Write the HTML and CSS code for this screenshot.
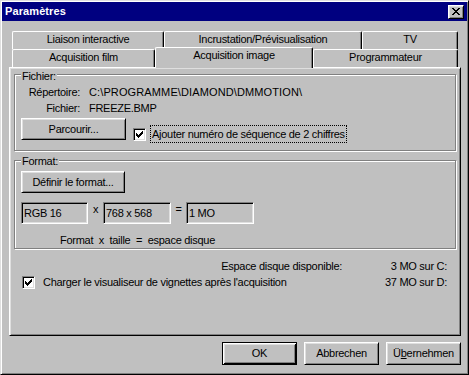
FILE: index.html
```html
<!DOCTYPE html>
<html lang="fr">
<head>
<meta charset="utf-8">
<title>Paramètres</title>
<link rel="stylesheet" href="styles.css">
</head>
<body>
<div class="window">
  <div class="titlebar">
    <span class="title">Paramètres</span>
    <span class="close">
      <svg width="8" height="7" viewBox="0 0 8 7" shape-rendering="crispEdges"><path d="M0 0h2v1H0zM6 0h2v1H6zM1 1h2v1H1zM5 1h2v1H5zM2 2h4v1H2zM3 3h2v1H3zM2 4h4v1H2zM1 5h2v1H1zM5 5h2v1H5zM0 6h2v1H0zM6 6h2v1H6z" fill="#000"/></svg>
    </span>
  </div>
  <div class="client">
    <div class="tabs">
      <div class="tabrow">
        <div class="tab t-liaison">Liaison interactive</div>
        <div class="tab t-incrust">Incrustation/Prévisualisation</div>
        <div class="tab t-tv">TV</div>
      </div>
      <div class="tabrow">
        <div class="tab t-film">Acquisition film</div>
        <div class="tab t-image active">Acquisition image</div>
        <div class="tab t-prog">Programmateur</div>
      </div>
    </div>
    <div class="panel">
      <div class="group g-fichier">
        <div class="legend">Fichier:</div>
        <div class="field-row first"><span class="lbl">Répertoire:</span><span class="val caps">C:\PROGRAMME\DIAMOND\DMMOTION\</span></div>
        <div class="field-row"><span class="lbl">Fichier:</span><span class="val">FREEZE.BMP</span></div>
        <div class="action-row">
          <div class="btn b-parcourir">Parcourir...</div>
          <div class="check-wrap">
            <span class="checkbox"><svg width="7" height="7" viewBox="0 0 7 7" shape-rendering="crispEdges"><path d="M6 0h1v1H6zM5 1h2v1H5zM0 2h1v1H0zM4 2h3v1H4zM0 3h2v1H0zM3 3h3v1H3zM0 4h5v1H0zM1 5h3v1H1zM2 6h1v1H2z" fill="#000"/></svg></span>
            <span class="focus">Ajouter numéro de séquence de 2 chiffres</span>
          </div>
        </div>
      </div>
      <div class="group g-format">
        <div class="legend">Format:</div>
        <div class="btn b-definir">Définir le format...</div>
        <div class="fields">
          <div class="field f-rgb">RGB 16</div>
          <span class="sep">x</span>
          <div class="field f-wide">768 x 568</div>
          <span class="sep">=</span>
          <div class="field f-wide">1 MO</div>
        </div>
        <div class="caption">Format  x  taille  =  espace disque</div>
      </div>
      <div class="info">
        <div class="info-row">
          <span class="info-lbl">Espace disque disponible:</span>
          <span class="info-val">3 MO sur C:</span>
        </div>
        <div class="info-row">
          <span class="checkbox cb-left"><svg width="7" height="7" viewBox="0 0 7 7" shape-rendering="crispEdges"><path d="M6 0h1v1H6zM5 1h2v1H5zM0 2h1v1H0zM4 2h3v1H4zM0 3h2v1H0zM3 3h3v1H3zM0 4h5v1H0zM1 5h3v1H1zM2 6h1v1H2z" fill="#000"/></svg></span>
          <span class="cb-label">Charger le visualiseur de vignettes après l'acquisition</span>
          <span class="info-val">37 MO sur D:</span>
        </div>
      </div>
    </div>
    <div class="buttons">
      <div class="btn dlg default">OK</div>
      <div class="btn dlg">Abbrechen</div>
      <div class="btn dlg">Ü<u>b</u>ernehmen</div>
    </div>
  </div>
</div>
</body>
</html>
```
FILE: styles.css
```css
html, body {
  margin: 0;
  padding: 0;
  background: #c0c0c0;
}
body {
  font-family: "Liberation Sans", Arial, sans-serif;
  font-size: 11px;
  letter-spacing: -0.28px;
  color: #000;
}
.window {
  width: 469px;
  height: 375px;
  box-sizing: border-box;
  background: #c0c0c0;
  border: 1px solid;
  border-color: #dfdfdf #000 #000 #dfdfdf;
  box-shadow: inset 1px 1px 0 #fff, inset -1px -1px 0 #808080;
  padding: 1px;
}
.titlebar {
  height: 19px;
  background: #000080;
  display: flex;
  align-items: center;
  justify-content: space-between;
  padding-left: 3px;
}
.title {
  color: #fff;
  font-weight: bold;
  font-size: 11px;
  line-height: 13px;
  letter-spacing: 0.1px;
}
.close {
  box-sizing: border-box;
  width: 16px;
  height: 14px;
  margin-right: 3px;
  background: #c0c0c0;
  border: 1px solid;
  border-color: #fff #000 #000 #fff;
  box-shadow: inset 1px 1px 0 #dfdfdf, inset -1px -1px 0 #808080;
  display: flex;
  align-items: center;
  justify-content: center;
}
.close svg { display: block; margin-left: -1px; }
.client {
  padding: 10px 6px 0 7px;
}
.tabs {
  margin-left: 3px;
  width: 446px;
}
.tabrow {
  display: flex;
  height: 18px;
}
.tab {
  box-sizing: border-box;
  height: 18px;
  border-top: 1px solid #fff;
  border-left: 1px solid #fff;
  border-right: 1px solid #000;
  border-radius: 2px 2px 0 0;
  box-shadow: inset -1px 0 0 #808080;
  padding-top: 1px;
  line-height: 13px;
  text-align: center;
  white-space: nowrap;
  background: #c0c0c0;
}
.t-liaison { width: 152px; }
.t-incrust { width: 198px; }
.t-tv { width: 96px; }
.t-film { width: 143px; }
.t-image { width: 158px; }
.t-prog { width: 145px; }
.tab.active {
  position: relative;
  z-index: 1;
  height: 21px;
  margin-top: -2px;
}
.panel {
  height: 269px;
  box-sizing: border-box;
  border: 1px solid;
  border-color: #fff #000 #000 #fff;
  box-shadow: inset 1px 1px 0 #dfdfdf, inset -1px -1px 0 #808080;
  padding: 6px 4px 0 4px;
}
.group {
  border: 1px solid #808080;
  box-shadow: 1px 1px 0 #fff, inset 1px 1px 0 #fff;
  display: flex;
  flex-direction: column;
}
.legend {
  align-self: flex-start;
  margin: -5px 0 0 6px;
  padding: 0 1px;
  background: #c0c0c0;
  line-height: 13px;
}
.g-fichier { padding-bottom: 7px; }
.field-row {
  display: flex;
  line-height: 16px;
  white-space: nowrap;
}
.field-row.first { margin-top: 1px; }
.lbl {
  width: 65px;
  text-align: right;
}
.val { margin-left: 9px; }
.val.caps { letter-spacing: 0.12px; }
.action-row {
  display: flex;
  align-items: flex-start;
  margin-top: 2px;
  padding-left: 6px;
}
.btn {
  box-sizing: border-box;
  height: 22px;
  border: 1px solid;
  border-color: #fff #000 #000 #fff;
  box-shadow: inset 1px 1px 0 #dfdfdf, inset -1px -1px 0 #808080;
  display: flex;
  align-items: center;
  justify-content: center;
  line-height: 13px;
  white-space: nowrap;
}
.b-parcourir { width: 105px; }
.check-wrap {
  display: flex;
  align-items: center;
  margin: 7px 0 0 7px;
}
.checkbox {
  box-sizing: border-box;
  width: 13px;
  height: 13px;
  background: #fff;
  border: 1px solid;
  border-color: #808080 #fff #fff #808080;
  box-shadow: inset 1px 1px 0 #000, inset -1px -1px 0 #dfdfdf;
  display: flex;
  padding: 2px 0 0 2px;
  flex: none;
}
.checkbox svg { display: block; }
.focus {
  margin-left: 4px;
  border: 1px dotted #000;
  padding: 0 1px;
  line-height: 16px;
  white-space: nowrap;
}
.g-format {
  margin-top: 9px;
  padding-bottom: 1px;
}
.g-format .legend { margin-top: -6px; }
.b-definir {
  width: 104px;
  margin: 3px 0 0 6px;
}
.fields {
  display: flex;
  align-items: flex-start;
  margin-top: 9px;
  padding-left: 6px;
}
.field {
  box-sizing: border-box;
  height: 22px;
  border: 1px solid;
  border-color: #808080 #fff #fff #808080;
  box-shadow: inset 1px 1px 0 #000, inset -1px -1px 0 #dfdfdf;
  padding-left: 2px;
  display: flex;
  align-items: center;
  line-height: 13px;
  white-space: nowrap;
}
.f-rgb { width: 67px; }
.f-wide { width: 68px; }
.sep {
  width: 15px;
  text-align: center;
  line-height: 13px;
  padding-top: 1px;
}
.caption {
  margin: 10px 0 0 6px;
  width: 233px;
  text-align: center;
  line-height: 13px;
  white-space: pre;
}
.info {
  margin-top: 9px;
  padding-right: 9px;
}
.info-row {
  display: flex;
  align-items: center;
  line-height: 16px;
  white-space: nowrap;
}
.info-lbl { margin-left: auto; }
.info-val {
  width: 105px;
  text-align: right;
  margin-left: auto;
}
.info-row:first-child .info-val { margin-left: 0; }
.cb-left { margin-left: 8px; }
.cb-label { margin-left: 8px; }
.buttons {
  display: flex;
  justify-content: flex-end;
  gap: 7px;
  margin-top: 6px;
}
.btn.dlg {
  width: 75px;
  height: 23px;
}
.btn.default {
  border-color: #000;
  box-shadow: inset 1px 1px 0 #fff, inset -1px -1px 0 #000, inset 2px 2px 0 #dfdfdf, inset -2px -2px 0 #808080;
}
u { text-decoration: underline; text-underline-offset: 1px; }
```
